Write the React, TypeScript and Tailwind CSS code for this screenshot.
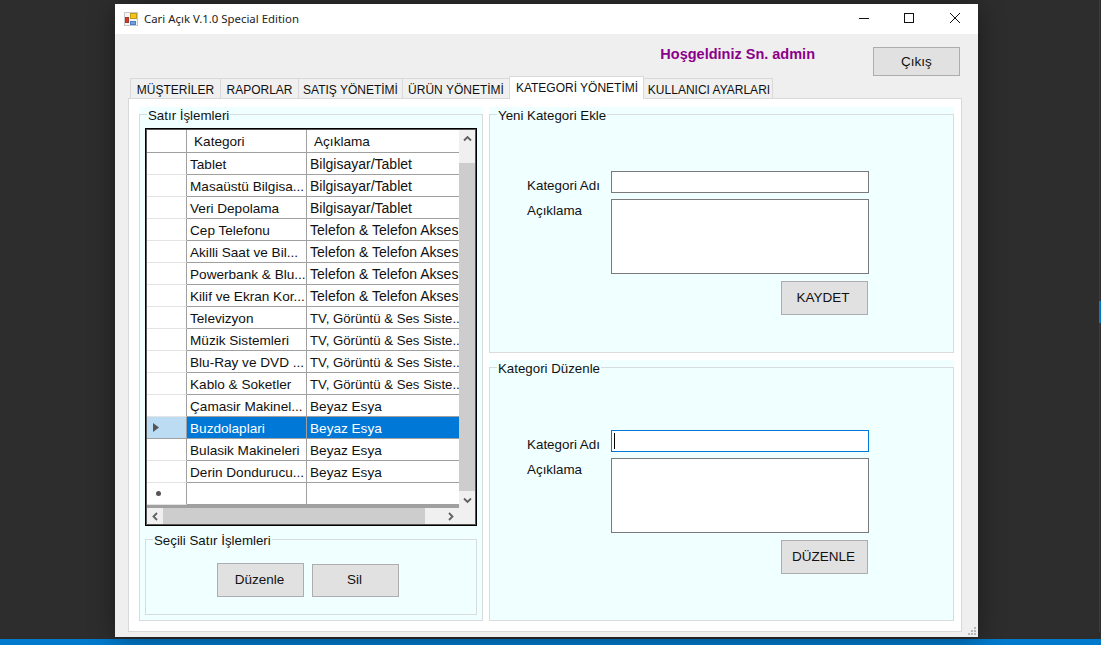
const rows: [string, string, string][] = [
  ["Tablet", "Bilgisayar/Tablet", "text-[14px]"],
  ["Masaüstü Bilgisa...", "Bilgisayar/Tablet", "text-[14px]"],
  ["Veri Depolama", "Bilgisayar/Tablet", "text-[14px]"],
  ["Cep Telefonu", "Telefon & Telefon Akses", "text-[14px]"],
  ["Akilli Saat ve Bil...", "Telefon & Telefon Akses", "text-[14px]"],
  ["Powerbank & Blu...", "Telefon & Telefon Akses", "text-[14px]"],
  ["Kilif ve Ekran Kor...", "Telefon & Telefon Akses", "text-[14px]"],
  ["Televizyon", "TV, Görüntü & Ses Siste..", "text-[13.2px]"],
  ["Müzik Sistemleri", "TV, Görüntü & Ses Siste..", "text-[13.2px]"],
  ["Blu-Ray ve DVD ...", "TV, Görüntü & Ses Siste..", "text-[13.2px]"],
  ["Kablo & Soketler", "TV, Görüntü & Ses Siste..", "text-[13.2px]"],
  ["Çamasir Makinel...", "Beyaz Esya", "text-[13.6px]"],
  ["Buzdolaplari", "Beyaz Esya", "text-[13.6px]"],
  ["Bulasik Makineleri", "Beyaz Esya", "text-[13.6px]"],
  ["Derin Dondurucu...", "Beyaz Esya", "text-[13.6px]"],
  ["", "", "text-[13.6px]"],
];

const tabs: [string, string][] = [
  ["MÜŞTERİLER", "w-[90px]"],
  ["RAPORLAR", "w-[78px]"],
  ["SATIŞ YÖNETİMİ", "w-[104px]"],
  ["ÜRÜN YÖNETİMİ", "w-[107px]"],
];

function Chevron({ d }: { d: string }) {
  return (
    <svg width="9" height="7" viewBox="0 0 9 7" className="block">
      <path d={d} fill="none" stroke="#606060" strokeWidth="1.8" />
    </svg>
  );
}

function ChevronH({ d }: { d: string }) {
  return (
    <svg width="7" height="9" viewBox="0 0 7 9" className="block">
      <path d={d} fill="none" stroke="#606060" strokeWidth="1.8" />
    </svg>
  );
}

function Group({ title, className, children }: { title: string; className: string; children?: React.ReactNode }) {
  return (
    <div className={`relative bg-[#f0ffff] pt-[7px] ${className}`}>
      <div className="h-full border border-[#d8dcdc]">{children}</div>
      <span className="absolute left-[8px] top-[1px] bg-[#f0ffff] px-[1px] text-[13.3px] leading-[15px] text-[#111]">{title}</span>
    </div>
  );
}

function Btn({ label, className }: { label: string; className: string }) {
  return (
    <div className={`flex items-center justify-center border border-[#adadad] bg-[#e1e1e1] text-[13.5px] text-[#111] ${className}`}>
      {label}
    </div>
  );
}

function FormFields({ focused }: { focused?: boolean }) {
  return (
    <div className="ml-[37px] flex">
      <div className="w-[84px] text-[13.4px] leading-[15px] text-[#111]">
        <div className="pt-[7px]">Kategori Adı</div>
        <div className="pt-[10px]">Açıklama</div>
      </div>
      <div className="w-[258px]">
        <div className={`flex h-[22px] items-center border ${focused ? "border-[#0078d7]" : "border-[#7a7a7a]"} bg-white pl-[2px]`}>
          {focused && <div className="h-[16px] w-[1px] bg-black" />}
        </div>
        <div className="mt-[6px] h-[75px] border border-[#7a7a7a] bg-white" />
      </div>
    </div>
  );
}

export default function App() {
  return (
    <div
      className="relative h-[645px] w-[1101px] overflow-hidden bg-[#2d2d2e] pt-[4px] pl-[115px]"
      style={{ fontFamily: '"Liberation Sans", Arial, sans-serif' }}
    >
      {/* Taskbar and accents */}
      <div className="absolute bottom-0 left-0 h-[6px] w-full bg-[#007acc]" />
      <div className="absolute right-[1px] top-0 h-[632px] w-[1px] bg-[#3c3c3c]" />
      <div className="absolute right-0 top-[301px] h-[22px] w-[2px] bg-[#007acc]" />

      <div className="relative h-[633px] w-[863px] bg-[#efefef] shadow-[0_2px_24px_rgba(0,0,0,0.4)]">
        {/* Title bar */}
        <div className="flex h-[30px] items-center bg-white pl-[8px] pr-[8px]">
          <svg width="15" height="15" viewBox="0 0 15 15" className="mr-[6px] block">
            <rect x="1.5" y="0.5" width="13" height="13" fill="#f4f4f4" stroke="#c8c8c8" />
            <rect x="7.5" y="1.5" width="6" height="5" fill="#f5c518" stroke="#c29a1a" />
            <rect x="2.5" y="5.5" width="3" height="5" fill="#d8352a" stroke="#a03a30" />
            <rect x="7.5" y="9.5" width="5" height="3" fill="#6f9fdc" stroke="#4a7fc8" />
          </svg>
          <span className="text-[11.4px] text-[#222]" style={{ fontFamily: '"Noto Sans", sans-serif' }}>Cari Açık V.1.0 Special Edition</span>
          <div className="ml-auto flex items-center pb-[2px]">
            <svg width="10" height="10" viewBox="0 0 10 10" className="mr-[35px] block"><path d="M0 5.5H10" stroke="#111" strokeWidth="1" /></svg>
            <svg width="10" height="10" viewBox="0 0 10 10" className="mr-[36px] block"><rect x="0.5" y="0.5" width="9" height="9" fill="none" stroke="#111" /></svg>
            <svg width="10" height="10" viewBox="0 0 10 10" className="mr-[10px] block"><path d="M0 0L10 10M10 0L0 10" stroke="#111" /></svg>
          </div>
        </div>

        {/* Header strip */}
        <div className="flex h-[44px] items-start justify-end pr-[18px]">
          <span className="mr-[58px] mt-[13px] text-[14.5px] font-bold leading-[15px] text-[#8b008b]">Hoşgeldiniz Sn. admin</span>
          <Btn label="Çıkış" className="mt-[13px] h-[29px] w-[87px] pt-[2px]" />
        </div>

        {/* Tab strip */}
        <div className="ml-[15px] flex h-[20px] items-end text-[12px] leading-[18px] text-[#111]">
          {tabs.map(([t, w]) => (
            <div key={t} className={`flex h-[20px] items-center justify-center border-l border-t border-[#d9d9d9] bg-[#f0f0f0] pt-[2px] ${w}`}>{t}</div>
          ))}
          <div className="relative z-10 -mb-[1px] flex h-[23px] w-[135px] items-center justify-center border-x border-t border-[#d9d9d9] bg-white pl-[1px]">KATEGORİ YÖNETİMİ</div>
          <div className="flex h-[20px] w-[129px] items-center justify-center border-r border-t border-[#d9d9d9] bg-[#f0f0f0] pl-[2px] pt-[2px]">KULLANICI AYARLARI</div>
        </div>

        {/* Tab page */}
        <div className="ml-[13px] mr-[16px] flex h-[534px] gap-[6px] border border-[#d9d9d9] bg-white pl-[10px] pr-[7px] pt-[8px]">
          <Group title="Satır İşlemleri" className="h-[514px] w-[344px]">
            <div className="px-[5px] pt-[13px]">
              {/* Data grid */}
              <div className="h-[398px] w-[332px] border border-black bg-[#555] p-[1px]">
                <div className="h-[394px] bg-[#f0f0f0]">
                  <div className="flex h-[378px]">
                    <div className="w-[312px]">
                      <div className="flex h-[23px] border-b border-[#a0a0a0] bg-white text-[13.6px] leading-[24px] text-[#111]">
                        <div className="w-[40px] border-r border-[#a0a0a0]" />
                        <div className="w-[120px] border-r border-[#a0a0a0] pl-[7px]">Kategori</div>
                        <div className="flex-1 pl-[7px]">Açıklama</div>
                      </div>
                      {rows.map(([a, b, size], i) => {
                        const sel = i === 12;
                        return (
                          <div key={i} className="flex h-[22px] leading-[23px]">
                            <div className={`flex w-[40px] items-center justify-center border-b border-r ${sel ? "border-[#a0a0a0] bg-[#bcdcf4]" : "border-b-[#e4e4e4] border-r-[#a0a0a0] bg-white"}`}>
                              {sel && (
                                <svg width="6" height="9" viewBox="0 0 6 9" className="mr-[21px] block"><path d="M0 0L6 4.5L0 9Z" fill="#555" /></svg>
                              )}
                              {i === 15 && <div className="mr-[17px] h-[5px] w-[5px] rounded-full bg-[#555]" />}
                            </div>
                            <div className={`w-[120px] overflow-hidden whitespace-nowrap border-b border-r border-[#a0a0a0] pl-[3px] text-[13.6px] ${sel ? "bg-[#0078d7] text-white" : "bg-white text-[#111]"}`}>{a}</div>
                            <div className={`w-[152px] overflow-hidden whitespace-nowrap border-b border-[#a0a0a0] pl-[3px] ${size} ${sel ? "bg-[#0078d7] text-white" : "bg-white text-[#111]"}`}>{b}</div>
                          </div>
                        );
                      })}
                      <div className="h-[3px] bg-[#a0a0a0]" />
                    </div>
                    {/* Vertical scrollbar */}
                    <div className="flex w-[16px] flex-col bg-[#f0f0f0]">
                      <div className="flex h-[33px] justify-center pt-[5px]"><Chevron d="M1 5.5L4.5 2L8 5.5" /></div>
                      <div className="h-[328px] bg-[#cdcdcd]" />
                      <div className="flex flex-1 items-start justify-center pt-[6px]"><Chevron d="M1 1.5L4.5 5L8 1.5" /></div>
                    </div>
                  </div>
                  {/* Horizontal scrollbar */}
                  <div className="flex h-[16px] w-[312px] items-center bg-[#f0f0f0]">
                    <div className="flex w-[16px] justify-center"><ChevronH d="M5 1L1.5 4.5L5 8" /></div>
                    <div className="h-[16px] w-[262px] bg-[#cdcdcd]" />
                    <div className="flex flex-1 justify-end pr-[5px]"><ChevronH d="M2 1L5.5 4.5L2 8" /></div>
                  </div>
                </div>
              </div>
              <Group title="Seçili Satır İşlemleri" className="mt-[6px] h-[83px] w-[332px]">
                <div className="flex gap-[8px] pl-[71px] pt-[23px]">
                  <Btn label="Düzenle" className="h-[34px] w-[87px] pr-[2px]" />
                  <Btn label="Sil" className="mt-[1px] h-[33px] w-[87px] pr-[2px]" />
                </div>
              </Group>
            </div>
          </Group>

          <div className="flex w-[465px] flex-col gap-[7px]">
            <Group title="Yeni Kategori Ekle" className="h-[246px]">
              <div className="pt-[56px]">
                <FormFields />
                <div className="ml-[291px] mt-[7px]"><Btn label="KAYDET" className="h-[34px] w-[87px] pr-[3px]" /></div>
              </div>
            </Group>
            <Group title="Kategori Düzenle" className="h-[261px]">
              <div className="pt-[62px]">
                <FormFields focused />
                <div className="ml-[291px] mt-[7px]"><Btn label="DÜZENLE" className="h-[34px] w-[87px] pr-[2px]" /></div>
              </div>
            </Group>
          </div>
        </div>

        {/* Resize grip */}
        <svg width="8" height="8" viewBox="0 0 8 8" className="absolute bottom-[2px] right-[2px] block">
          <path d="M6 0h2v2H6zM3 3h2v2H3zM6 3h2v2H6zM0 6h2v2H0zM3 6h2v2H3zM6 6h2v2H6z" fill="#b8b8b8" />
        </svg>
      </div>
    </div>
  );
}
